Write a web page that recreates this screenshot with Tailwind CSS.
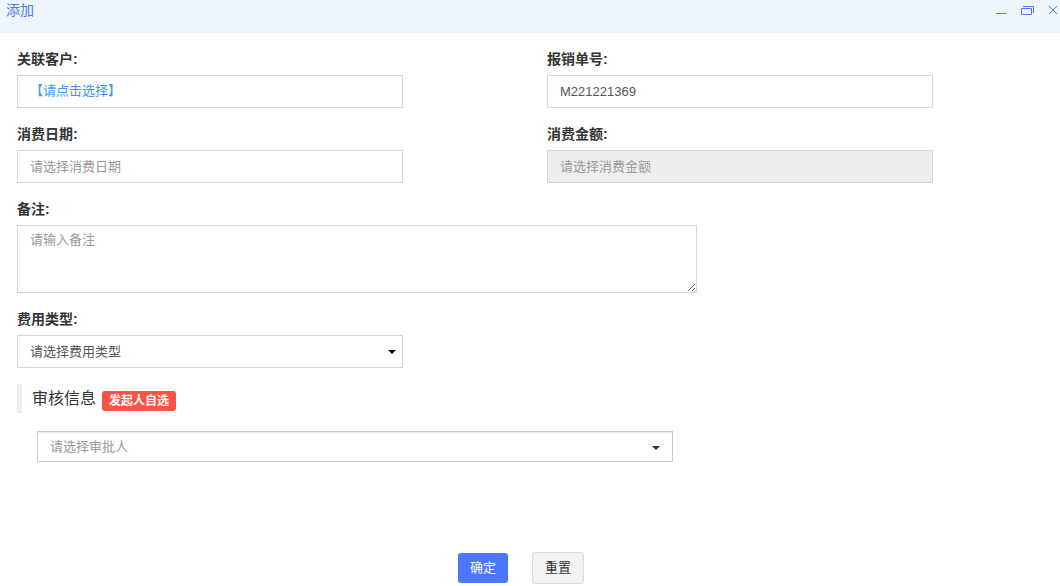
<!DOCTYPE html>
<html lang="zh-CN">

<head>
  <meta charset="UTF-8">
  <meta name="viewport" content="width=device-width, initial-scale=1.0">
  <title>添加</title>
  <script src="https://cdn.jsdelivr.net/npm/@tailwindcss/browser@4"></script>
</head>

<body class="flex min-h-screen flex-col bg-white font-['Liberation_Sans','Noto_Sans_CJK_SC',sans-serif] text-[13px] leading-5 text-[#333]">

  <!-- Title bar -->
  <header class="flex h-[33px] items-start justify-between bg-[#edf5ff] pl-1.5 text-[#4d76ff]">
    <h1 class="text-sm">添加</h1>
    <div class="flex gap-3">
      <button type="button" aria-label="最小化" class="flex h-5 w-3.5 items-center justify-center">
        <svg class="h-3 w-3" viewBox="0 0 12 12" fill="none" stroke="currentColor">
          <path d="M1 9.5h10" />
        </svg>
      </button>
      <button type="button" aria-label="还原" class="flex h-5 w-3.5 items-center justify-center">
        <svg class="h-3 w-3.5" viewBox="0 0 14 12" fill="none" stroke="currentColor">
          <path d="M1.5 4.5h10v6h-10zM3 2.5h10.5v6.5" />
        </svg>
      </button>
      <button type="button" aria-label="关闭" class="flex h-5 w-3.5 items-center justify-center">
        <svg class="h-3 w-3" viewBox="0 0 12 12" fill="none" stroke="currentColor">
          <path d="M2 2l8 8M10 2l-8 8" />
        </svg>
      </button>
    </div>
  </header>

  <form id="expenseForm" class="flex grow flex-col">
    <div class="grid grid-cols-2 gap-x-[34px] gap-y-4 px-[17px] pt-4">
      <div>
        <label for="customer" class="mb-1.5 block text-sm/5 font-bold">关联客户:</label>
        <button type="button" id="customer" class="block h-[33px] w-[386px] max-w-full border border-[#d2d5de] px-3 pb-0.5 text-left text-[#3d97ff]">【请点击选择】</button>
      </div>
      <div>
        <label for="number" class="mb-1.5 block text-sm/5 font-bold">报销单号:</label>
        <input type="text" id="number" value="M221221369" class="block h-[33px] w-[386px] max-w-full border border-[#d2d5de] px-3 text-[#555]">
      </div>
      <div>
        <label for="date" class="mb-1.5 block text-sm/5 font-bold">消费日期:</label>
        <input type="text" id="date" placeholder="请选择消费日期" class="block h-[33px] w-[386px] max-w-full border border-[#d2d5de] px-3 text-[#555] placeholder:text-[#999]">
      </div>
      <div>
        <label for="amount" class="mb-1.5 block text-sm/5 font-bold">消费金额:</label>
        <input type="text" id="amount" placeholder="请选择消费金额" readonly class="block h-[33px] w-[386px] max-w-full border border-[#d2d5de] bg-[#eee] px-3 text-[#555] placeholder:text-[#999]">
      </div>
      <div class="col-span-2">
        <label for="remark" class="mb-1.5 block text-sm/5 font-bold">备注:</label>
        <textarea id="remark" placeholder="请输入备注" class="block h-[68px] w-[680px] max-w-full resize border border-[#d2d5de] px-3 py-1 text-[#555] placeholder:text-[#999]"></textarea>
      </div>
      <div>
        <label for="type" class="mb-1.5 block text-sm/5 font-bold">费用类型:</label>
        <div class="relative w-[386px] max-w-full">
          <select id="type" class="block h-[33px] w-full appearance-none border border-[#d2d5de] px-3 text-[#555]">
            <option>请选择费用类型</option>
          </select>
          <svg class="pointer-events-none absolute top-[15px] right-[7px] h-1 w-2" viewBox="0 0 8 4" fill="#000">
            <path d="M0 0h8L4 4z" />
          </svg>
        </div>
      </div>
    </div>

    <!-- Approval -->
    <section class="px-[17px] pt-4">
      <div class="flex h-[29px] items-center border-l-[5px] border-[#eee] pl-2.5">
        <h2 class="text-base">审核信息</h2>
        <span class="mt-1 ml-1.5 rounded-[3px] bg-[#fb5444] px-[7px] text-xs/5 font-bold text-white">发起人自选</span>
      </div>
      <div class="relative mt-[18px] ml-5 w-[636px] max-w-full">
        <select id="approver" aria-label="审批人" class="block h-[31px] w-full appearance-none border border-[#ccc] px-3 text-[#999] shadow-[inset_0_1px_1px_rgba(0,0,0,0.075)]">
          <option>请选择审批人</option>
        </select>
        <svg class="pointer-events-none absolute top-[15px] right-[13px] h-1 w-2" viewBox="0 0 8 4" fill="#333">
          <path d="M0 0h8L4 4z" />
        </svg>
      </div>
    </section>

    <div class="mt-auto flex items-center justify-center gap-6 pt-4 pr-[18px] pb-0.5">
      <button type="submit" class="h-[30px] rounded-[3px] bg-[#4d76ff] px-3 text-white">确定</button>
      <button type="reset" class="h-8 rounded-[3px] border border-[#ddd] bg-[#f3f3f3] px-3 text-[#333]">重置</button>
    </div>
  </form>

</body>

</html>
